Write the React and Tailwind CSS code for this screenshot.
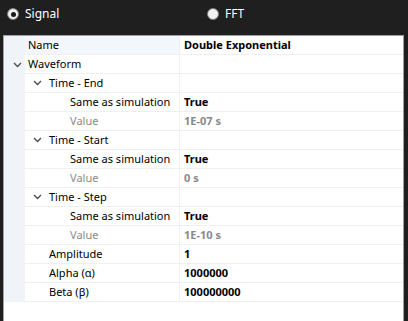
import React from "react";

const Chevron = () => (
  <svg width="9" height="6" viewBox="0 0 9 6" className="shrink-0">
    <path d="M1 1l3.5 3.5L8 1" fill="none" stroke="#4a4a4a" strokeWidth="1.3" />
  </svg>
);

const rows = [
  { label: "Name", value: "Double Exponential", indent: 0, header: true },
  { label: "Waveform", indent: 0, expand: true },
  { label: "Time - End", indent: 1, expand: true },
  { label: "Same as simulation", indent: 2, value: "True" },
  { label: "Value", indent: 2, value: "1E-07 s", muted: true },
  { label: "Time - Start", indent: 1, expand: true },
  { label: "Same as simulation", indent: 2, value: "True" },
  { label: "Value", indent: 2, value: "0 s", muted: true },
  { label: "Time - Step", indent: 1, expand: true },
  { label: "Same as simulation", indent: 2, value: "True" },
  { label: "Value", indent: 2, value: "1E-10 s", muted: true },
  { label: "Amplitude", indent: 1, value: "1" },
  { label: "Alpha (α)", indent: 1, value: "1000000" },
  { label: "Beta (β)", indent: 1, value: "100000000" },
];

const Radio = ({ checked, label }) => (
  <div className="flex items-center gap-[6px]">
    <div className="w-[12px] h-[12px] rounded-full bg-[#f0f0f0] border border-[#7a7a7a] flex items-center justify-center">
      {checked && <div className="w-[5px] h-[5px] rounded-full bg-[#1a1a1a]" />}
    </div>
    <span className="text-[12px] text-white">{label}</span>
  </div>
);

export default function App() {
  return (
    <div
      className="w-[408px] h-[321px] bg-[#1f1f1f] overflow-hidden flex flex-col"
      style={{ fontFamily: '"Noto Sans", "Open Sans", sans-serif' }}
    >
      <div className="h-[35px] flex items-start pt-[5px] pl-[7px]">
        <div className="w-[200px]">
          <Radio checked label="Signal" />
        </div>
        <Radio label="FFT" />
      </div>
      <div className="ml-[3px] w-[401px] flex-1 border-t border-l border-r border-[#a0a0a0] bg-white">
        {rows.map((r, i) => (
          <div key={i} className="flex h-[19px] text-[11px] leading-[18px]">
            <div className="w-[21px] bg-[#f0f4f9] flex items-center justify-end pr-[3px]">
              {r.expand && r.indent === 0 && <Chevron />}
            </div>
            <div
              className={`w-[155px] border-b border-r border-[#f0f0f0] flex items-center whitespace-nowrap ${r.header ? "bg-[#f3f7fb]" : ""}`}
            >
              {r.indent === 0 && <span className="pl-[3px]">{r.label}</span>}
              {r.indent > 0 && (
                <div
                  className={`flex items-center ${r.indent === 1 ? "pl-[8px]" : "pl-[45px]"}`}
                >
                  {r.indent === 1 && (
                    <div className="w-[16px] flex items-center">{r.expand && <Chevron />}</div>
                  )}
                  <span className={r.muted ? "text-[#8a8a8a]" : "text-black"}>{r.label}</span>
                </div>
              )}
            </div>
            <div
              className={`flex-1 border-b border-[#f0f0f0] pl-[4px] font-bold flex items-center ${r.muted ? "text-[#888888]" : "text-black"}`}
            >
              {r.value}
            </div>
          </div>
        ))}
      </div>
    </div>
  );
}
